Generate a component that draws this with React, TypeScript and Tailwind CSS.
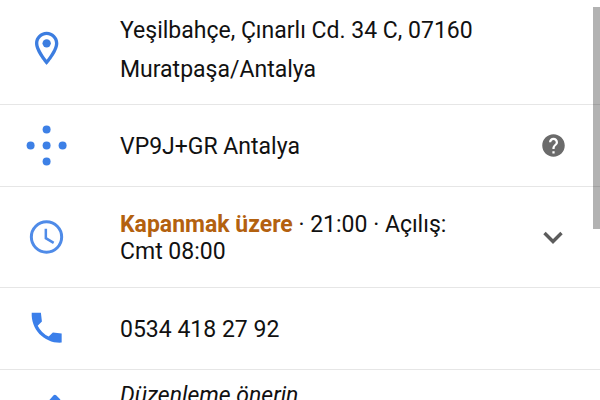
import { useState } from 'react'
import type { ReactNode } from 'react'

interface InfoRowProps {
  icon: ReactNode
  children: ReactNode
  action?: ReactNode
  className?: string
}

function PlaceIcon() {
  return (
    <svg viewBox="0.2 1 24 24" className="size-10 overflow-visible fill-[#3c7de0]" aria-hidden="true">
      <path d="M12 2C8.13 2 5 5.13 5 9c0 5.25 7 13 7 13s7-7.75 7-13c0-3.87-3.13-7-7-7zM7 9c0-2.76 2.24-5 5-5s5 2.24 5 5c0 2.88-2.88 7.19-5 9.88C9.92 16.21 7 11.85 7 9z" />
      <circle cx="12" cy="9" r="2.5" />
    </svg>
  )
}

function PlusCodeIcon() {
  return (
    <svg viewBox="0 0 40 40" className="size-10 overflow-visible fill-[#3d80e6]" aria-hidden="true">
      <circle cx="19.6" cy="3.6" r="4" />
      <circle cx="3.6" cy="19.6" r="4" />
      <circle cx="19.6" cy="19.6" r="4" />
      <circle cx="35.6" cy="19.6" r="4" />
      <circle cx="19.6" cy="35.6" r="4" />
    </svg>
  )
}

function ClockIcon() {
  return (
    <svg viewBox="0.3 0.6 24 24" className="size-10 fill-none stroke-[#4f8be8]" aria-hidden="true">
      <circle cx="12" cy="12" r="9.1" strokeWidth="1.8" />
      <path d="M11.6 7v5.7l4.7 2.8" strokeWidth="1.5" />
    </svg>
  )
}

function PhoneIcon() {
  return (
    <svg viewBox="0.2 0.8 24 24" className="size-10 fill-[#3b7fea]" aria-hidden="true">
      <path d="M21 15.46l-5.27-.61-2.52 2.52a15.045 15.045 0 0 1-6.59-6.59l2.53-2.53L8.54 3H3.03C2.45 13.18 10.82 21.55 21 20.97v-5.51z" />
    </svg>
  )
}

function PencilIcon() {
  return (
    <svg viewBox="0 0.6 24 24" className="size-9 fill-[#3b7fea]" aria-hidden="true">
      <path d="M3 17.3V21h3.7l9-9L12 8.3l-9 9zM20.6 7.4a1 1 0 0 0 0-1.4l-2.5-2.5a1.2 1.2 0 0 0-1.7 0L12.8 7.5l3.7 3.7 4.1-3.8z" />
    </svg>
  )
}

function HelpIcon() {
  return (
    <svg viewBox="0 0.8 24 24" className="size-[27px] fill-[#6b6b6b]" aria-hidden="true">
      <path d="M12 2C6.48 2 2 6.48 2 12s4.48 10 10 10 10-4.48 10-10S17.52 2 12 2zm1 17h-2v-2h2v2zm2.07-7.75l-.9.92C13.45 12.9 13 13.5 13 15h-2v-.5c0-1.1.45-2.1 1.17-2.83l1.24-1.26c.37-.36.59-.86.59-1.41 0-1.1-.9-2-2-2s-2 .9-2 2H8c0-2.21 1.79-4 4-4s4 1.79 4 4c0 .88-.36 1.68-.93 2.25z" />
    </svg>
  )
}

function ChevronIcon() {
  return (
    <svg viewBox="0 1 40 40" className="size-10 fill-none stroke-[#5c5c5c]" aria-hidden="true">
      <path d="M11.5 16 20 24.5l8.5-8.5" strokeWidth="3.4" />
    </svg>
  )
}

function InfoRow({ icon, children, action, className = '' }: InfoRowProps) {
  return (
    <li className={`flex items-center border-b border-[#e6e6e6] px-[27px] ${className}`}>
      <span className="flex w-10 shrink-0 justify-center">{icon}</span>
      <div className="ml-[53px] min-w-0 flex-1">{children}</div>
      {action}
    </li>
  )
}

export default function App() {
  const [expanded, setExpanded] = useState(false)

  return (
    <main className="relative h-screen overflow-hidden bg-white font-['Roboto',sans-serif] text-[23px] leading-[27px] text-[#111111]">
      <ul>
        <InfoRow icon={<PlaceIcon />} className="pt-[11px] pb-[15px]">
          <p className="max-w-[400px] leading-[39px]">
            Yeşilbahçe, Çınarlı Cd. 34 C, 07160 Muratpaşa/Antalya
          </p>
        </InfoRow>

        <InfoRow
          icon={<PlusCodeIcon />}
          className="pt-[21px] pb-5"
          action={
            <button type="button" aria-label="Yardım" className="flex w-10 justify-center">
              <HelpIcon />
            </button>
          }
        >
          <p>VP9J+GR Antalya</p>
        </InfoRow>

        <InfoRow
          icon={<ClockIcon />}
          className="pt-6 pb-[22px]"
          action={
            <button
              type="button"
              aria-label="Çalışma saatleri"
              aria-expanded={expanded}
              onClick={() => setExpanded(!expanded)}
              className="flex w-10 justify-center"
            >
              <ChevronIcon />
            </button>
          }
        >
          <p className="max-w-[350px]">
            <strong className="font-bold text-[#b3610f]">Kapanmak üzere</strong>
            {' · 21:00 · Açılış: Cmt 08:00'}
          </p>
        </InfoRow>

        <InfoRow icon={<PhoneIcon />} className="pt-[21px] pb-5">
          <a href="tel:05344182792">0534 418 27 92</a>
        </InfoRow>

        <InfoRow icon={<PencilIcon />} className="pt-3 pb-[15px]">
          <p className="min-h-[54px]">
            <a href="#duzenle" className="italic">
              Düzenleme önerin
            </a>
          </p>
        </InfoRow>
      </ul>

      {/* scroll thumb */}
      <div className="absolute top-[7px] right-0 h-[222px] w-[7px] bg-black/30" />
    </main>
  )
}
